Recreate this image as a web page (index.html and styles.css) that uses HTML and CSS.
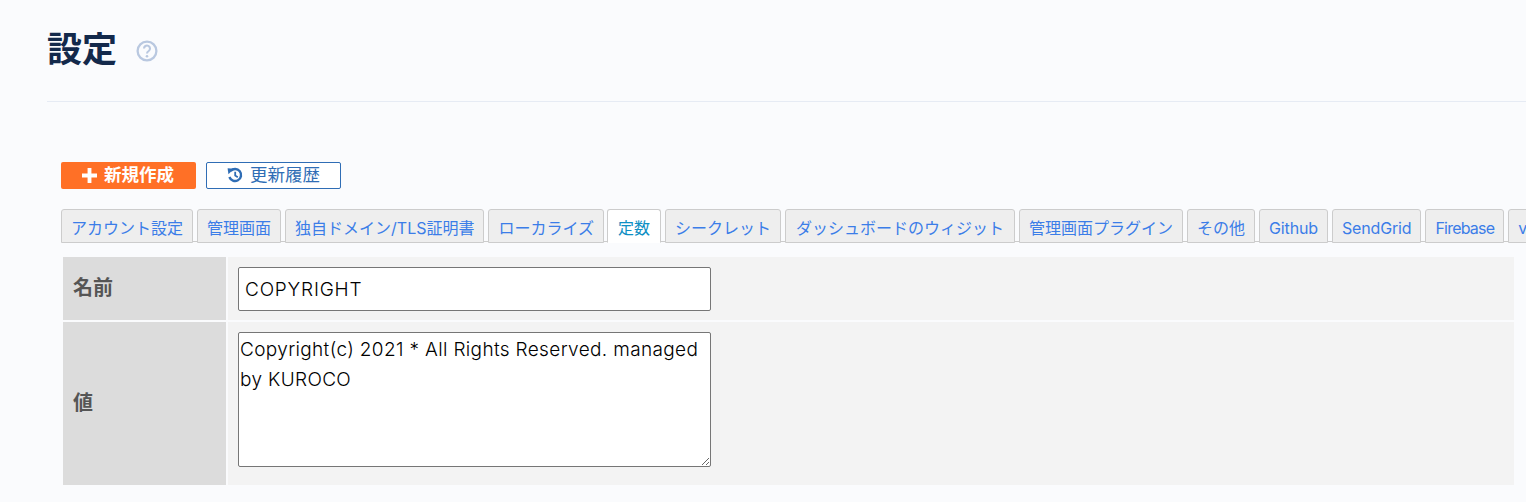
FILE: index.html
```html
<!DOCTYPE html>
<html lang="ja">
<head>
<meta charset="utf-8">
<title>設定</title>
<link rel="stylesheet" href="styles.css">
</head>
<body>
<header class="page-header">
  <h1 class="title">設定</h1>
  <svg class="help" viewBox="0 0 22 22" width="22" height="22" aria-hidden="true">
    <circle cx="11" cy="11" r="9.4" fill="none" stroke="#b9c8e0" stroke-width="2.3"/>
    <path d="M8 8.6a3 3 0 1 1 4.7 2.4c-1 .7-1.7 1.2-1.7 2.4" fill="none" stroke="#b9c8e0" stroke-width="2.1"/>
    <circle cx="11" cy="16.2" r="1.3" fill="#b9c8e0"/>
  </svg>
</header>
<main class="content">
  <div class="actions">
    <a class="btn btn-primary">
      <svg viewBox="0 0 14 14" width="15" height="15" aria-hidden="true"><path d="M5.2 0h3.6v5.2H14v3.6H8.8V14H5.2V8.8H0V5.2h5.2z" fill="#fff"/></svg>
      新規作成
    </a>
    <a class="btn btn-outline">
      <svg viewBox="0 0 16 16" width="16" height="16" aria-hidden="true">
        <path d="M3.6 4A6 6 0 1 1 2.4 10" fill="none" stroke="#2f6db5" stroke-width="2.4"/>
        <path d="M.6 1.2l6.4.6-5.6 5.4z" fill="#2f6db5"/>
        <path d="M8.2 4.8v3.8l2.6 1.6" fill="none" stroke="#2f6db5" stroke-width="1.8"/>
      </svg>
      更新履歴
    </a>
  </div>
  <nav class="tabs">
    <a class="tab">アカウント設定</a>
    <a class="tab">管理画面</a>
    <a class="tab">独自ドメイン/TLS証明書</a>
    <a class="tab">ローカライズ</a>
    <a class="tab tab-active">定数</a>
    <a class="tab">シークレット</a>
    <a class="tab tab-wide">ダッシュボードのウィジット</a>
    <a class="tab">管理画面プラグイン</a>
    <a class="tab">その他</a>
    <a class="tab tab-latin">Github</a>
    <a class="tab tab-latin">SendGrid</a>
    <a class="tab tab-tight">Firebase</a>
    <a class="tab">v</a>
  </nav>
  <div class="form">
    <div class="label">名前</div>
    <div class="field">
      <input class="input" type="text" value="COPYRIGHT">
    </div>
    <div class="label">値</div>
    <div class="field">
      <textarea class="textarea">Copyright(c) 2021 * All Rights Reserved. managed by KUROCO</textarea>
    </div>
  </div>
</main>
</body>
</html>
```
FILE: styles.css
```css
* { box-sizing: border-box; }
html, body { margin: 0; height: 502px; overflow: hidden; }
body {
  background: #fafbfd;
  font-family: "Inter", "Noto Sans CJK JP", sans-serif;
  color: #111;
}
.page-header {
  margin-left: 47px;
  height: 102px;
  padding-top: 26px;
  border-bottom: 1px solid #e6ebf4;
  display: flex;
  align-items: flex-start;
}
.title {
  margin: 0;
  font: 700 35px/42px "Noto Sans CJK JP", sans-serif;
  color: #13294b;
}
.help { margin: 14px 0 0 19px; }
.content { padding: 60px 0 0 61px; }
.actions { display: flex; gap: 10px; }
.btn {
  width: 135px;
  height: 27px;
  padding-bottom: 3px;
  border-radius: 2px;
  display: flex;
  align-items: center;
  justify-content: center;
  gap: 7px;
  font: 500 17.5px/1 "Noto Sans CJK JP", sans-serif;
}
.btn svg { margin-top: 2px; }
.btn-primary { background: #ff7026; color: #fff; font-weight: 700; padding-right: 1px; }
.btn-outline { background: #fff; border: 1px solid #2f6db5; color: #2f6db5; font-weight: 400; }
.tabs {
  display: flex;
  gap: 4px;
  margin-top: 20px;
  height: 34px;
  overflow: hidden;
  background: linear-gradient(#ccc, #ccc) 0 32px / 100% 1px no-repeat;
}
.tab {
  flex: none;
  height: 34px;
  padding: 0 9px;
  border: 1px solid #ccc;
  border-radius: 3px 3px 0 0;
  background: #eee;
  color: #3b7de8;
  font: 400 16px/36px "Inter", "Noto Sans CJK JP", sans-serif;
  white-space: nowrap;
}
.tab-active {
  margin-left: -1px;
  padding: 0 10px;
  background: #fff;
  color: #0e8fc4;
  border-bottom-color: #fff;
}
.tab-wide { padding: 0 10px; }
.tab-latin { letter-spacing: -.15px; }
.tab-tight { letter-spacing: -.8px; }
.form {
  display: grid;
  grid-template-columns: 163px 1286px;
  grid-template-rows: 63px 163px;
  gap: 2px;
  margin: 14px 0 0 2px;
}
.label {
  background: #dcdcdc;
  color: #555;
  font: 700 20px/1 "Noto Sans CJK JP", sans-serif;
  display: flex;
  align-items: center;
  padding: 0 0 3px 10px;
}
.field { background: #f3f3f3; padding: 10px; }
.input, .textarea {
  display: block;
  width: 473px;
  border: 1px solid #767676;
  border-radius: 2px;
  background: #fff;
  color: #000;
  font-family: "Inter", "Noto Sans CJK JP", sans-serif;
  font-size: 19px;
  font-weight: 300;
}
.input { height: 44px; padding: 0 6px; letter-spacing: .8px; }
.textarea { height: 135px; padding: 2px 1px; line-height: 30px; letter-spacing: .35px; }
```
